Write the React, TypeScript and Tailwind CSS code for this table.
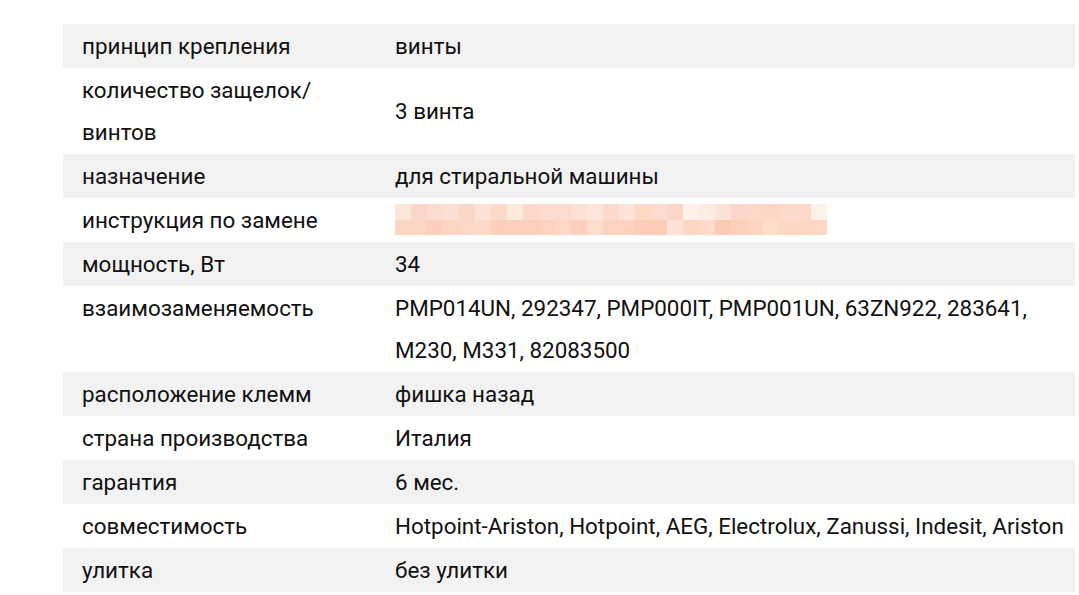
import React from 'react'

const topPixels = [
  '#fde6dc', '#fcd6c8', '#fcdcd1', '#fde0d5', '#fcd6c7', '#fde2d7', '#fdd9c8', '#fee9df', '#fdd8cb',
  '#fddbce', '#fddace', '#fde0d6', '#fee6dc', '#fdd9cb', '#fde4da', '#fdd9c5', '#fddcd0', '#fcd6c8',
  '#fef0ea', '#feebe2', '#fde2d7', '#fcd6c8', '#fdd8c9', '#fdd6c5', '#fdd9cb', '#fdd9cb', '#fdf1ec',
]

const bottomPixels = [
  '#fdd5c3', '#fdd5c3', '#fdcfbc', '#fdd5c4', '#fdd7c7', '#fdd9c9', '#fdcfbb', '#fdd0bc', '#fdd0bc',
  '#fdd2c1', '#fdd8c8', '#fdcfbc', '#fdddcd', '#fdd2c1', '#fdd2c1', '#fdcdb8', '#fdcdb8', '#fde2d9',
  '#fdd6c5', '#fddac9', '#fdcab3', '#fdd0bc', '#fdd4c2', '#fddcc9', '#fdd6c4', '#fdd6c4', '#fdd8c6',
]

// pixelated placeholder, hidden link in the original
function Blurred() {
  return (
    <div className="flex flex-col py-[5px]">
      <div className="flex h-[16px]">
        {topPixels.map((c, i) => (
          <div key={i} className="w-[16px] h-full" style={{ backgroundColor: c }} />
        ))}
      </div>
      <div className="flex h-[15px]">
        {bottomPixels.map((c, i) => (
          <div key={i} className="w-[16px] h-full" style={{ backgroundColor: c }} />
        ))}
      </div>
    </div>
  )
}

type Row = {
  label: React.ReactNode
  value: React.ReactNode
  middle?: boolean
}

const rows: Row[] = [
  { label: 'принцип крепления', value: 'винты' },
  {
    label: (
      <>
        количество защелок/
        <br />
        винтов
      </>
    ),
    value: '3 винта',
    middle: true,
  },
  { label: 'назначение', value: 'для стиральной машины' },
  { label: 'инструкция по замене', value: <Blurred /> },
  { label: 'мощность, Вт', value: '34' },
  {
    label: 'взаимозаменяемость',
    value: (
      <>
        PMP014UN, 292347, PMP000IT, PMP001UN, 63ZN922, 283641,
        <br />
        M230, M331, 82083500
      </>
    ),
  },
  { label: 'расположение клемм', value: 'фишка назад' },
  { label: 'страна производства', value: 'Италия' },
  { label: 'гарантия', value: '6 мес.' },
  { label: 'совместимость', value: 'Hotpoint-Ariston, Hotpoint, AEG, Electrolux, Zanussi, Indesit, Ariston' },
  { label: 'улитка', value: 'без улитки' },
]

export default function App() {
  return (
    <div
      className="w-[1079px] h-[595px] bg-white overflow-hidden pt-[24px] pl-[63px]"
      style={{ fontFamily: 'Roboto, "Noto Sans", sans-serif' }}
    >
      <div className="w-[1012px] text-[22.4px] leading-[42px] text-[#111]">
        {rows.map((row, i) => (
          <div
            key={i}
            className={`grid grid-cols-[313px_1fr] py-[1px] ${i % 2 === 0 ? 'bg-[#f2f2f2]' : 'bg-white'}`}
          >
            <div className="pl-[19px] whitespace-nowrap">{row.label}</div>
            <div className={`pl-[19px] whitespace-nowrap flex ${row.middle ? 'items-center' : 'items-start'}`}>
              <div>{row.value}</div>
            </div>
          </div>
        ))}
      </div>
    </div>
  )
}
